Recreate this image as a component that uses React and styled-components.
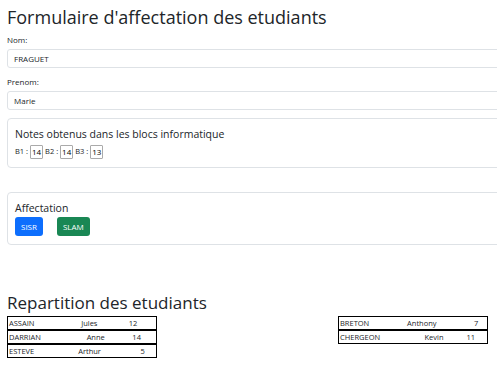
import React from "react";
import styled, { createGlobalStyle } from "styled-components";

const students = [
  [
    { nom: "ASSAIN", prenom: "Jules", note: 12 },
    { nom: "DARRIAN", prenom: "Anne", note: 14 },
    { nom: "ESTEVE", prenom: "Arthur", note: 5 }
  ],
  [],
  [
    { nom: "BRETON", prenom: "Anthony", note: 7 },
    { nom: "CHERGEON", prenom: "Kevin", note: 11 }
  ]
];

const App = () => {
  return (
    <Page>
      <GlobalStyle />
      <Title>Formulaire d'affectation des etudiants</Title>

      <Field $top={6}>
        <Label htmlFor="nom">Nom:</Label>
        <Input id="nom" type="text" defaultValue="FRAGUET" />
      </Field>

      <Field $top={8}>
        <Label htmlFor="prenom">Prenom:</Label>
        <Input id="prenom" type="text" defaultValue="Marie" />
      </Field>

      <Card $top={8}>
        <CardTitle>Notes obtenus dans les blocs informatique</CardTitle>
        <Notes>
          B1 : <Note>14</Note> B2 : <Note>14</Note> B3 : <Note>13</Note>
        </Notes>
      </Card>

      <Card $top={24} $bottom={8}>
        <CardTitle>Affectation</CardTitle>
        <Buttons>
          <Button $color="#0d6efd">SISR</Button>
          <Button $color="#198754">SLAM</Button>
        </Buttons>
      </Card>

      <SubTitle>Repartition des etudiants</SubTitle>
      <Columns>
        {students.map((col, i) => (
          <Column key={i}>
            {col.map(s => (
              <Row key={s.nom}>
                <tbody>
                  <tr>
                    <Cell>{s.nom}</Cell>
                    <Cell>{s.prenom}</Cell>
                    <Cell>{s.note}</Cell>
                  </tr>
                </tbody>
              </Row>
            ))}
          </Column>
        ))}
      </Columns>
    </Page>
  );
};

// Styled components
const GlobalStyle = createGlobalStyle`
  html, body {
    margin: 0;
    padding: 0;
    background: #ffffff;
    overflow: hidden;
  }
  body {
    font-family: "Open Sans", "Noto Sans", sans-serif;
    color: #212529;
  }
`;

const Page = styled.div`
  width: 530px;
  padding: 0 7px;
`;

const Title = styled.h1`
  margin: 0;
  padding-top: 6px;
  font-size: 18px;
  font-weight: 400;
  line-height: 22px;
`;

const Field = styled.div`
  margin-top: ${p => p.$top}px;
`;

const Label = styled.label`
  display: block;
  font-size: 8px;
  line-height: 12px;
  margin-bottom: 3px;
`;

const Input = styled.input`
  display: block;
  box-sizing: border-box;
  width: 100%;
  height: 19px;
  padding: 0 6px;
  border: 1px solid #dee2e6;
  border-radius: 3px;
  font-family: inherit;
  font-size: 8px;
  color: #212529;
  outline: none;
`;

const Card = styled.div`
  box-sizing: border-box;
  margin-top: ${p => p.$top}px;
  padding: 8px 7px ${p => p.$bottom || 8}px;
  border: 1px solid #dee2e6;
  border-radius: 4px;
`;

const CardTitle = styled.div`
  font-size: 10.5px;
  line-height: 14px;
  margin-bottom: 2px;
`;

const Notes = styled.div`
  font-size: 7.5px;
  line-height: 16px;
`;

const Note = styled.span`
  display: inline-block;
  box-sizing: border-box;
  min-width: 12px;
  height: 14px;
  padding: 0 1px;
  border: 1px solid #aaa;
  border-radius: 1px;
  text-align: center;
  line-height: 12px;
  color: #000;
  font-size: 8px;
  vertical-align: middle;
`;

const Buttons = styled.div`
  display: flex;
  gap: 14px;
`;

const Button = styled.button`
  height: 19px;
  padding: 0 6px;
  border: none;
  border-radius: 3px;
  background: ${p => p.$color};
  color: #ffffff;
  font-family: inherit;
  font-size: 8px;
  cursor: pointer;
`;

const SubTitle = styled.h2`
  margin: 48px 0 0;
  font-size: 17px;
  font-weight: 400;
  line-height: 20px;
`;

const Columns = styled.div`
  display: grid;
  grid-template-columns: repeat(3, 165.5px);
  margin-top: 3px;
`;

const Column = styled.div``;

const Row = styled.table`
  width: 150px;
  border: 1px solid #000;
  border-collapse: collapse;
  font-size: 7.5px;
`;

const Cell = styled.td`
  padding: 0 1px;
  height: 12px;
  line-height: 12px;
`;

export default App;
